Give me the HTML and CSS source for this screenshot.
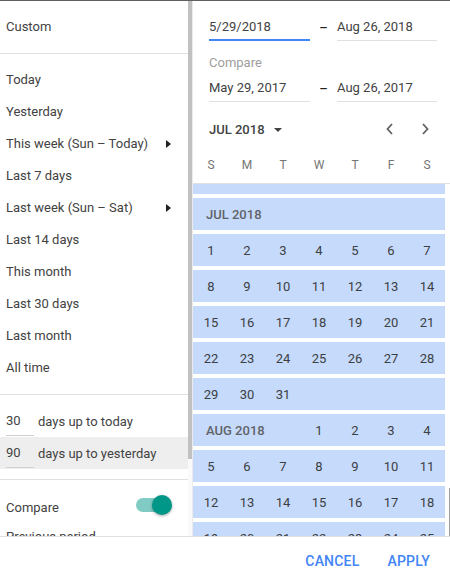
FILE: index.html
```html
<!DOCTYPE html>
<html>
<head>
<meta charset="utf-8">
<link rel="stylesheet" href="styles.css">
</head>
<body>
<div class="app">
  <div class="main">
    <div class="presets">
      <div class="custom">Custom</div>
      <div class="sep"></div>
      <ul class="list">
        <li class="item">Today</li>
        <li class="item">Yesterday</li>
        <li class="item">This week (Sun – Today)<span class="tri"></span></li>
        <li class="item">Last 7 days</li>
        <li class="item">Last week (Sun – Sat)<span class="tri"></span></li>
        <li class="item">Last 14 days</li>
        <li class="item">This month</li>
        <li class="item">Last 30 days</li>
        <li class="item">Last month</li>
        <li class="item">All time</li>
      </ul>
      <div class="sep"></div>
      <div class="rel">
        <div class="rel-row"><span class="num">30</span><span>days up to today</span></div>
        <div class="rel-row active"><span class="num">90</span><span>days up to yesterday</span></div>
      </div>
      <div class="sep"></div>
      <div class="compare-row"><span>Compare</span><span class="switch"><span class="knob"></span></span></div>
      <div class="prev">Previous period</div>
    </div>
    <div class="vscroll"><div class="thumb"></div></div>
    <div class="right">
      <div class="fields">
        <div class="date-row">
          <div class="input active">5/29/2018</div>
          <div class="dash">–</div>
          <div class="input wide">Aug 26, 2018</div>
        </div>
        <div class="cmp-label">Compare</div>
        <div class="date-row second">
          <div class="input">May 29, 2017</div>
          <div class="dash">–</div>
          <div class="input wide">Aug 26, 2017</div>
        </div>
        <div class="month-row">
          <div class="month">JUL 2018 <svg class="caret" width="10" height="6" viewBox="0 0 10 6"><path d="M1 1 L9 1 L5 5 Z" fill="#424242"/></svg></div>
          <div class="navs">
            <svg width="16" height="16" viewBox="0 0 16 16"><path d="M10 3 L5.5 8 L10 13" fill="none" stroke="#616161" stroke-width="1.8"/></svg>
            <svg width="16" height="16" viewBox="0 0 16 16"><path d="M6 3 L10.5 8 L6 13" fill="none" stroke="#616161" stroke-width="1.8"/></svg>
          </div>
        </div>
      </div>
      <div class="weekdays">
        <span>S</span><span>M</span><span>T</span><span>W</span><span>T</span><span>F</span><span>S</span>
      </div>
      <div class="cal">
        <div class="strip"></div>
        <div class="week"><span class="mlabel">JUL 2018</span></div>
        <div class="week"><span>1</span><span>2</span><span>3</span><span>4</span><span>5</span><span>6</span><span>7</span></div>
        <div class="week"><span>8</span><span>9</span><span>10</span><span>11</span><span>12</span><span>13</span><span>14</span></div>
        <div class="week"><span>15</span><span>16</span><span>17</span><span>18</span><span>19</span><span>20</span><span>21</span></div>
        <div class="week"><span>22</span><span>23</span><span>24</span><span>25</span><span>26</span><span>27</span><span>28</span></div>
        <div class="week"><span>29</span><span>30</span><span>31</span></div>
        <div class="week"><span class="mlabel short">AUG 2018</span><span>1</span><span>2</span><span>3</span><span>4</span></div>
        <div class="week"><span>5</span><span>6</span><span>7</span><span>8</span><span>9</span><span>10</span><span>11</span></div>
        <div class="week"><span>12</span><span>13</span><span>14</span><span>15</span><span>16</span><span>17</span><span>18</span></div>
        <div class="week"><span>19</span><span>20</span><span>21</span><span>22</span><span>23</span><span>24</span><span>25</span></div>
      </div>
      <div class="rscroll"></div>
    </div>
  </div>
  <div class="footer">
    <button class="btn">CANCEL</button>
    <button class="btn">APPLY</button>
  </div>
</div>
</body>
</html>
```

FILE: styles.css
```css
* { box-sizing: border-box; }
html, body { margin: 0; padding: 0; }
body {
  width: 450px;
  height: 580px;
  overflow: hidden;
  font-family: Roboto, "Liberation Sans", Arial, sans-serif;
  font-size: 13px;
  color: #424242;
  background: #fff;
}
.app {
  width: 450px;
  height: 580px;
  border-top: 1px solid #5f5f5f;
  display: flex;
  flex-direction: column;
}
.main {
  height: 536px;
  display: flex;
  overflow: hidden;
  border-bottom: 1px solid #e0e0e0;
}
.presets {
  width: 188px;
  flex: none;
  overflow: hidden;
}
.custom {
  height: 52px;
  line-height: 52px;
  padding-left: 6px;
}
.sep {
  height: 1px;
  background: #e0e0e0;
}
.list {
  list-style: none;
  margin: 0;
  padding: 10px 0;
}
.item {
  height: 32px;
  line-height: 32px;
  padding: 0 17px 0 6px;
  display: flex;
  align-items: center;
  justify-content: space-between;
}
.tri {
  width: 0;
  height: 0;
  border-top: 4px solid transparent;
  border-bottom: 4px solid transparent;
  border-left: 5px solid #212121;
}
.rel { padding: 10px 0; }
.rel-row {
  height: 32px;
  display: flex;
  align-items: center;
  padding-left: 6px;
  gap: 4px;
}
.rel-row.active { background: #eeeeee; }
.num {
  width: 28px;
  height: 28px;
  line-height: 20px;
  padding-top: 3px;
  margin-top: 2px;
  border-bottom: 1px solid #d0d0d0;
  flex: none;
}
.compare-row {
  margin-top: 11px;
  height: 32px;
  display: flex;
  align-items: center;
  justify-content: space-between;
  padding: 0 16px 0 6px;
}
.switch {
  position: relative;
  width: 36px;
  height: 20px;
  display: flex;
  align-items: center;
  margin-top: -4px;
}
.switch::before {
  content: "";
  width: 34px;
  height: 14px;
  border-radius: 7px;
  background: #80cbc4;
}
.knob {
  position: absolute;
  right: 0;
  top: 0;
  width: 20px;
  height: 20px;
  border-radius: 50%;
  background: #009688;
  box-shadow: 0 1px 3px rgba(0,0,0,0.35);
}
.prev {
  height: 24px;
  line-height: 24px;
  padding-left: 6px;
  margin-top: 2px;
}
.vscroll {
  width: 5px;
  flex: none;
  background: #fafafa;
  border-right: 1px solid #ebebeb;
}
.thumb {
  width: 4px;
  height: 458px;
  background: #c1c1c1;
}
.right {
  flex: 1;
  display: flex;
  flex-direction: column;
  position: relative;
  overflow: hidden;
}
.fields {
  padding: 16px 13px 0 16px;
}
.date-row {
  display: flex;
  align-items: flex-end;
}
.input {
  width: 101px;
  line-height: 20px;
  padding-bottom: 3px;
  border-bottom: 1px solid #e0e0e0;
  color: #424242;
}
.input.wide { width: 100px; }
.input.active {
  padding-bottom: 2px;
  border-bottom: 2px solid #4285f4;
}
.dash {
  width: 27px;
  line-height: 20px;
  padding-bottom: 3px;
  text-align: center;
  color: #212121;
  font-weight: 500;
}
.cmp-label {
  margin-top: 12px;
  line-height: 20px;
  color: #9e9e9e;
}
.date-row.second { margin-top: 5px; }
.month-row {
  margin-top: 15px;
  height: 24px;
  display: flex;
  align-items: center;
  justify-content: space-between;
}
.month {
  font-weight: 500;
  color: #424242;
  display: flex;
  align-items: center;
  gap: 8px;
}
.caret { margin-top: 1px; }
.navs {
  display: flex;
  gap: 19px;
  margin-right: 4px;
}
.weekdays {
  margin-top: 14px;
  display: grid;
  grid-template-columns: repeat(7, 36px);
  height: 29px;
  padding-bottom: 9px;
  border-bottom: 1px solid #e0e0e0;
  font-size: 12px;
  color: #757575;
  line-height: 20px;
  width: 100%;
}
.weekdays span { text-align: center; }
.cal {
  flex: 1;
  overflow: hidden;
  width: 252px;
}
.strip {
  height: 10px;
  background: #c6dafc;
  margin-bottom: 4px;
}
.week {
  height: 32px;
  margin-bottom: 4px;
  background: #c6dafc;
  display: grid;
  grid-template-columns: repeat(7, 36px);
  align-items: center;
  justify-items: center;
  color: #3c4043;
}
.mlabel {
  grid-column: 1 / span 7;
  justify-self: start;
  padding-left: 13px;
  font-weight: 500;
  color: #5f6368;
}
.mlabel.short { grid-column: 1 / span 3; }
.rscroll {
  position: absolute;
  right: 0;
  top: 487px;
  width: 1px;
  height: 50px;
  background: #9e9e9e;
}
.footer {
  flex: 1;
  display: flex;
  justify-content: flex-end;
  align-items: center;
  padding-right: 12px;
  gap: 12px;
  padding-top: 4px;
}
.btn {
  border: 0;
  background: none;
  font-family: Roboto, "Liberation Sans", Arial, sans-serif;
  font-size: 14px;
  font-weight: 500;
  color: #4285f4;
  padding: 6px 8px;
  letter-spacing: 0.2px;
}
```
